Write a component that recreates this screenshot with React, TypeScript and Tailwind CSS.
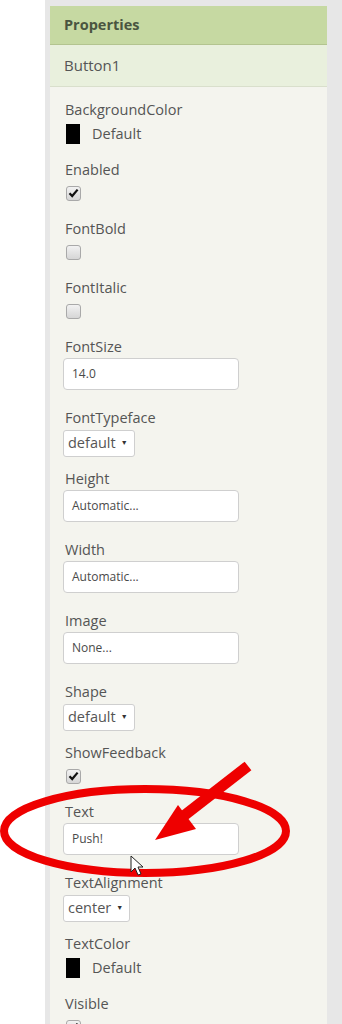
type Prop =
  | { name: string; kind: 'color' }
  | { name: string; kind: 'check'; checked: boolean }
  | { name: string; kind: 'input'; value: string }
  | { name: string; kind: 'select'; value: string }

const props: Prop[] = [
  { name: 'BackgroundColor', kind: 'color' },
  { name: 'Enabled', kind: 'check', checked: true },
  { name: 'FontBold', kind: 'check', checked: false },
  { name: 'FontItalic', kind: 'check', checked: false },
  { name: 'FontSize', kind: 'input', value: '14.0' },
  { name: 'FontTypeface', kind: 'select', value: 'default' },
  { name: 'Height', kind: 'input', value: 'Automatic...' },
  { name: 'Width', kind: 'input', value: 'Automatic...' },
  { name: 'Image', kind: 'input', value: 'None...' },
  { name: 'Shape', kind: 'select', value: 'default' },
  { name: 'ShowFeedback', kind: 'check', checked: true },
  { name: 'Text', kind: 'input', value: 'Push!' },
  { name: 'TextAlignment', kind: 'select', value: 'center' },
  { name: 'TextColor', kind: 'color' },
  { name: 'Visible', kind: 'check', checked: true },
]

function Checkbox({ checked }: { checked: boolean }) {
  return (
    <div className="ml-[3px] mt-[6px] mb-[18px] flex h-[15px] w-[15px] items-center justify-center rounded-[3px] border border-[#a9a9a9] bg-gradient-to-b from-[#f2f2f2] to-[#d6d6d6]">
      {checked && (
        <svg width="11" height="10" viewBox="0 0 11 10">
          <path d="M1.5 5.2 L4.2 8 L9.6 1.6" fill="none" stroke="#111" strokeWidth="2.2" />
        </svg>
      )}
    </div>
  )
}

function Control({ p }: { p: Prop }) {
  if (p.kind === 'color') {
    return (
      <div className="mt-[3px] mb-[15px] flex items-center">
        <div className="ml-[3px] h-[20px] w-[14px] bg-black" />
        <span className="ml-[12px] text-[14.5px] text-[#555]">Default</span>
      </div>
    )
  }
  if (p.kind === 'check') return <Checkbox checked={p.checked} />
  if (p.kind === 'input') {
    return (
      <div className="mt-px mb-[18px] flex h-[32px] w-[176px] items-center rounded-[4px] border border-[#cfcfcf] bg-white pl-[8px] text-[12px] text-[#4a4a4a]">
        {p.value}
      </div>
    )
  }
  return (
    <div className="mt-[2px] mb-[12px] flex h-[27px] w-fit items-center gap-[5px] rounded-[3px] border border-[#cfcfcf] bg-white pl-[4px] pr-[6px] text-[14.5px] text-[#555]">
      <span>{p.value}</span>
      <span className="text-[7px] text-[#333]">▼</span>
    </div>
  )
}

export default function App() {
  return (
    <div className="relative flex h-[1024px] w-[342px] overflow-hidden bg-white font-['Open_Sans',sans-serif]">
      <div className="w-[45px] shrink-0" />
      <div className="flex-1 bg-[#e7e7e7] pl-[5px] pr-[15px] pt-[6px]">
        <div className="h-full bg-[#f4f4ee]">
          {/* Header */}
          <div className="flex h-[39px] items-center border-b border-[#b3c48f] bg-[#c6d9a2] pl-[14px] text-[14.5px] font-bold text-[#4a5540]">
            Properties
          </div>
          <div className="flex h-[42px] items-center border-b border-[#d9dfcc] bg-[#e9f0dd] pl-[14px] text-[15px] text-[#555]">
            Button1
          </div>

          {/* Property list */}
          <div className="flex flex-col items-start px-[13px] pt-[13px]">
            {props.map((p) => (
              <div key={p.name} className="flex flex-col items-start">
                <div className="h-[20px] pl-[2px] text-[14.5px] leading-[20px] text-[#555]">{p.name}</div>
                <Control p={p} />
              </div>
            ))}
          </div>
        </div>
      </div>

      {/* Annotation overlay */}
      <svg className="pointer-events-none absolute left-0 top-0" width="342" height="1024" viewBox="0 0 342 1024">
        <ellipse cx="145" cy="831" rx="141" ry="42" fill="none" stroke="#ee0000" strokeWidth="8" />
        <line x1="248" y1="766" x2="172" y2="825" stroke="#ee0000" strokeWidth="11" />
        <polygon points="155,840 178,805 196,829" fill="#ee0000" />
        <path
          d="M131 856 L131 872 L135 868 L138 875 L141 874 L138 867 L143 867 Z"
          fill="#fff"
          stroke="#222"
          strokeWidth="1"
          strokeLinejoin="round"
        />
      </svg>
    </div>
  )
}
